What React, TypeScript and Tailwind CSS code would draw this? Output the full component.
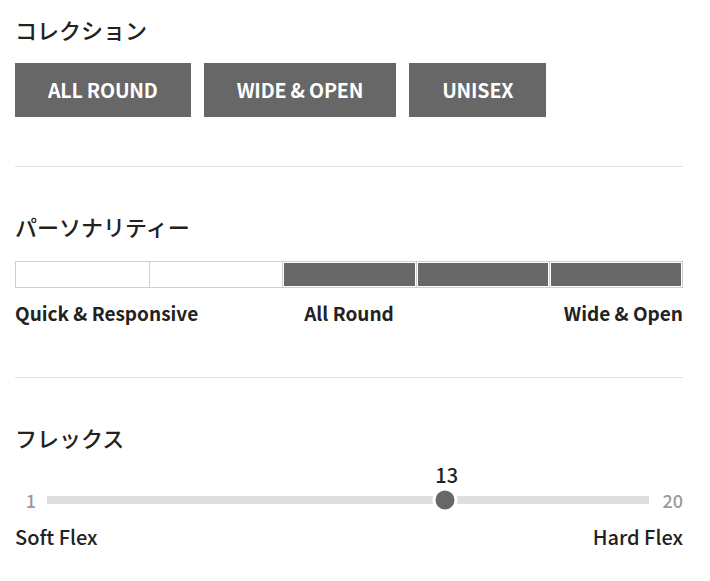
import React from 'react';

const collections = ['ALL ROUND', 'WIDE & OPEN', 'UNISEX'];

export default function App() {
    const personality = [false, false, true, true, true];

    return (
        <div className="bg-white w-[710px] min-h-[581px] text-[#222]" style={{ fontFamily: '"Noto Sans CJK JP", "Noto Sans", sans-serif' }}>
            <div className="ml-[15px] w-[668px]">
                {/* Collection */}
                <h2 className="pt-[14px] text-[22px] leading-[30px] font-medium">コレクション</h2>
                <div className="mt-[19px] flex gap-[13px]">
                    {collections.map((c) => (
                        <button key={c} className="h-[54px] px-[33px] bg-[#676767] text-white text-[19.6px] font-bold tracking-[-0.2px]">
                            {c}
                        </button>
                    ))}
                </div>

                <div className="mt-[49px] h-px bg-[#e3e3e3]" />

                {/* Personality */}
                <h2 className="mt-[44px] text-[22px] leading-[30px] font-medium">パーソナリティー</h2>
                <div className="mt-[20px] h-[27px] grid grid-cols-5 border border-[#cfcfcf]">
                    {personality.map((on, i) => (
                        <div key={i} className={`p-px bg-white ${i > 0 ? 'border-l border-[#cfcfcf]' : ''}`}>
                            {on && <div className="w-full h-full bg-[#676767]" />}
                        </div>
                    ))}
                </div>
                <div className="mt-[12px] grid grid-cols-3 text-[19px] leading-[26px] font-semibold">
                    <span>Quick &amp; Responsive</span>
                    <span className="text-center">All Round</span>
                    <span className="text-right">Wide &amp; Open</span>
                </div>

                <div className="mt-[51px] h-px bg-[#e3e3e3]" />

                {/* Flex */}
                <h2 className="mt-[44px] text-[22px] leading-[30px] font-medium">フレックス</h2>
                <div className="mt-[12px] flex items-center h-[48px]">
                    <span className="w-[32px] text-center text-[18px] text-[#9a9a9a] font-medium mt-[24px]">1</span>
                    <div className="flex-1 relative h-[8px] bg-[#dedede] mt-[24px]">
                        <div className="absolute left-[66.1%] top-1/2 -translate-x-1/2 -translate-y-1/2 w-[25px] h-[25px] rounded-full bg-white flex items-center justify-center">
                            <div className="w-[19px] h-[19px] rounded-full bg-[#676767]" />
                        </div>
                        <span className="absolute left-[66.4%] -top-[33px] -translate-x-1/2 text-[20px] leading-[24px] font-medium">13</span>
                    </div>
                    <span className="ml-[12px] w-[22px] text-right text-[18px] text-[#9a9a9a] font-medium mt-[24px]">20</span>
                </div>
                <div className="mt-[12px] flex justify-between text-[20px] leading-[26px] font-medium">
                    <span>Soft Flex</span>
                    <span>Hard Flex</span>
                </div>
            </div>
        </div>
    );
}
